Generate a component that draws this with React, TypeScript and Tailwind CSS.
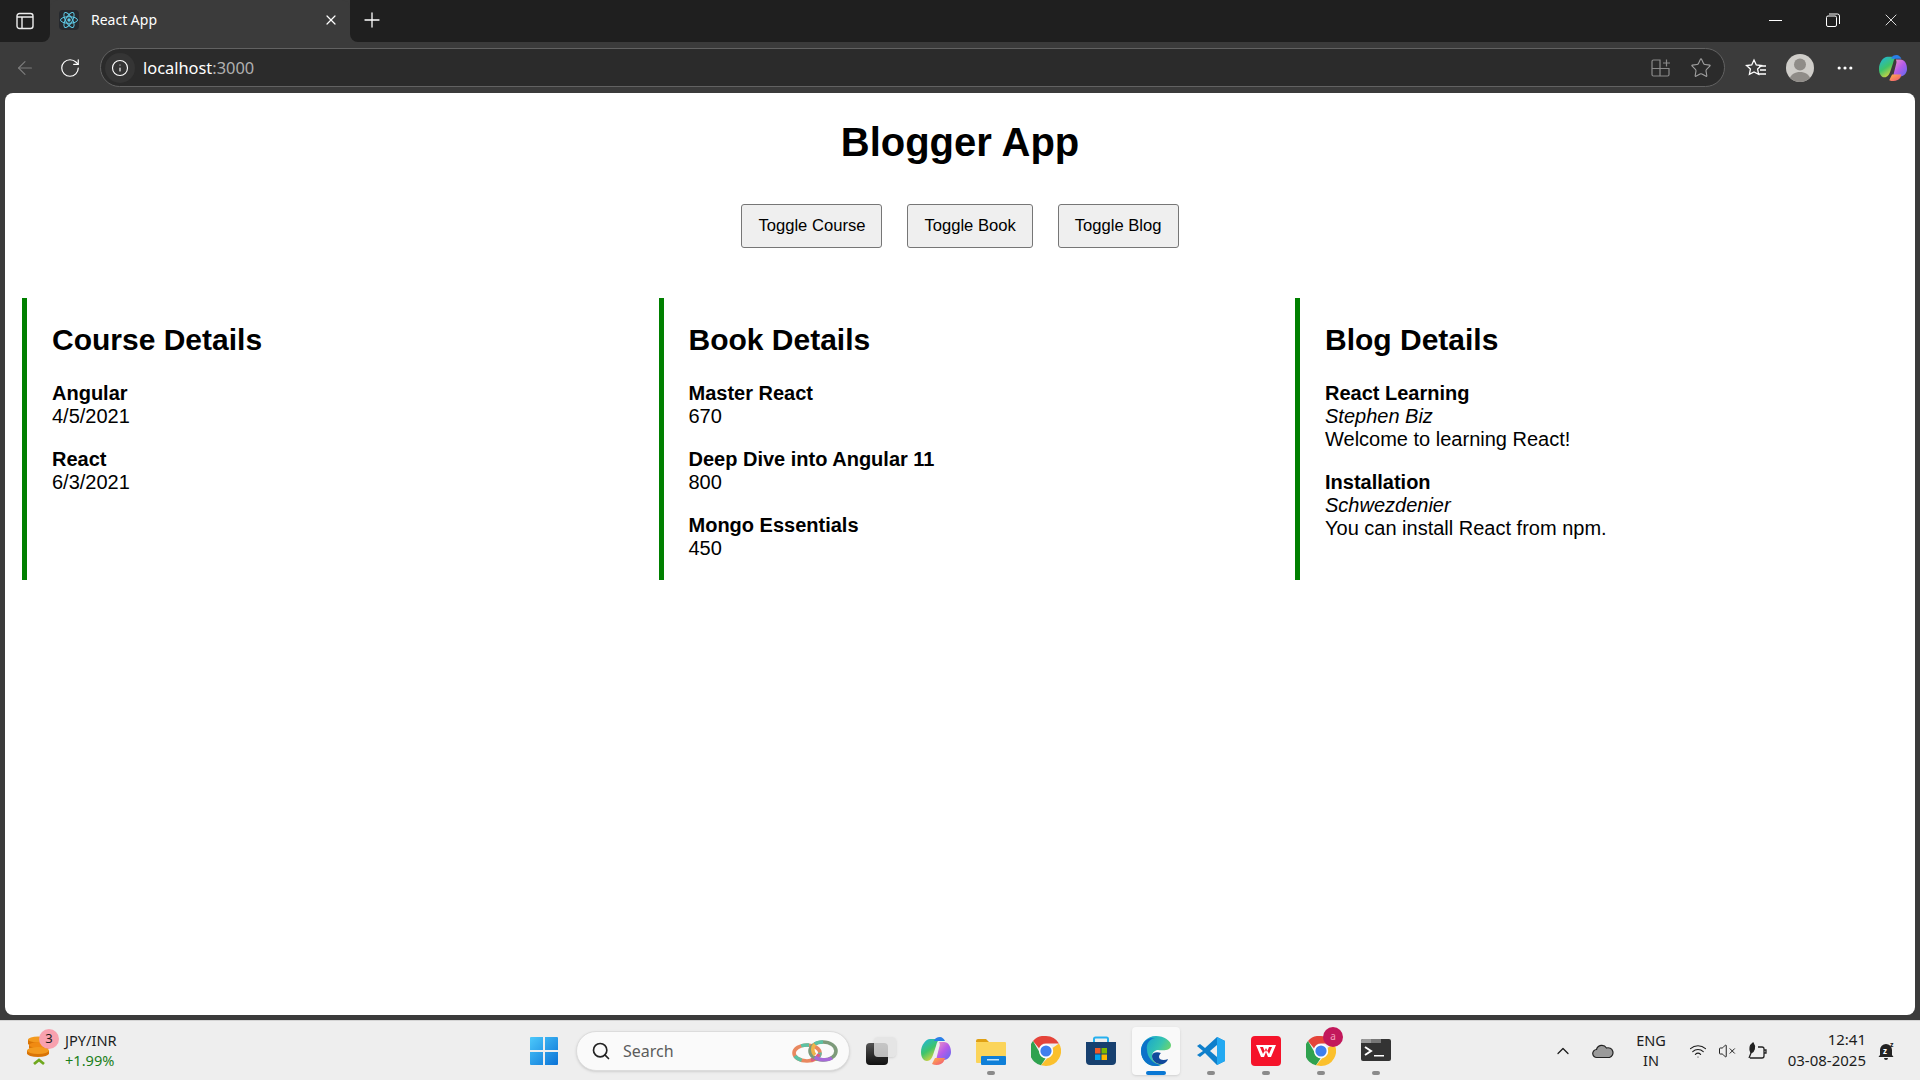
import { useState } from 'react'
import { ArrowLeft, RotateCw, Info, X, Plus, Star, MoreHorizontal, ChevronUp, Search, VolumeX, Wifi } from 'lucide-react'

const courses = [
  { name: 'Angular', date: '4/5/2021' },
  { name: 'React', date: '6/3/2021' },
]
const books = [
  { name: 'Master React', price: 670 },
  { name: 'Deep Dive into Angular 11', price: 800 },
  { name: 'Mongo Essentials', price: 450 },
]
const blogs = [
  { title: 'React Learning', author: 'Stephen Biz', body: 'Welcome to learning React!' },
  { title: 'Installation', author: 'Schwezdenier', body: 'You can install React from npm.' },
]

function ReactLogo() {
  return (
    <svg viewBox="0 0 20 20" className="h-5 w-5 rounded-sm bg-[#26292e]" fill="none" stroke="#5ecbe8" strokeWidth="1">
      <ellipse cx="10" cy="10" rx="8.5" ry="3.3" />
      <ellipse cx="10" cy="10" rx="8.5" ry="3.3" transform="rotate(60 10 10)" />
      <ellipse cx="10" cy="10" rx="8.5" ry="3.3" transform="rotate(120 10 10)" />
      <circle cx="10" cy="10" r="1.7" fill="#5ecbe8" stroke="none" />
    </svg>
  )
}

function Copilot({ size, id }: { size: number; id: string }) {
  return (
    <svg viewBox="0 0 30 30" width={size} height={size}>
      <defs>
        <linearGradient id={id + 'a'} x1="0" y1="0" x2="0.6" y2="1">
          <stop offset="0" stopColor="#1cb4e8" />
          <stop offset="0.55" stopColor="#3fc46a" />
          <stop offset="1" stopColor="#e8d33a" />
        </linearGradient>
        <linearGradient id={id + 'b'} x1="0" y1="0" x2="1" y2="1">
          <stop offset="0" stopColor="#f29ac0" />
          <stop offset="0.5" stopColor="#b65be8" />
          <stop offset="1" stopColor="#5a6cf0" />
        </linearGradient>
        <linearGradient id={id + 'c'} x1="0" y1="0" x2="1" y2="1">
          <stop offset="0" stopColor="#ffb347" />
          <stop offset="1" stopColor="#f0507a" />
        </linearGradient>
      </defs>
      <path d="M9 3h10c-2 1-3 3-4 7l-3 9c-1 3-3 6-6 6-3 0-6-3-6-9C0 9 5 3 9 3z" fill={`url(#${id}a)`} />
      <path d="M19 1c-3 0-5 1-6 4h11c-1-2-3-4-5-4z" fill="#2a7fe8" />
      <path d="M18 6h5c4 0 7 4 7 10 0 4-3 8-7 8h-8l3-12c1-3 1-4 0-6z" fill={`url(#${id}b)`} />
      <path d="M11 28c4 2 10 1 12-3l1-3H14l-2 4z" fill={`url(#${id}c)`} />
    </svg>
  )
}

function WindowsLogo() {
  return (
    <svg viewBox="0 0 30 30" width="30" height="30">
      <defs>
        <linearGradient id="win" x1="0" y1="0" x2="1" y2="1">
          <stop offset="0" stopColor="#4cc9fb" />
          <stop offset="1" stopColor="#0a72d6" />
        </linearGradient>
      </defs>
      <path d="M1 2a1 1 0 0 1 1-1h12v13H1zM16 1h12a1 1 0 0 1 1 1v12H16zM1 16h13v13H2a1 1 0 0 1-1-1zM16 16h13v12a1 1 0 0 1-1 1H16z" fill="url(#win)" />
    </svg>
  )
}

function Rings() {
  return (
    <svg viewBox="0 0 48 26" width="48" height="26" fill="none" strokeWidth="3.6">
      <ellipse cx="16" cy="15" rx="13" ry="8" stroke="#e9885f" />
      <ellipse cx="16" cy="15" rx="13" ry="8" stroke="#5bc2a4" strokeDasharray="8 14" />
      <path d="M20 22c4-1 7-3 8-6" stroke="#e05a83" />
      <ellipse cx="32" cy="13" rx="13" ry="9" stroke="#7d9a7a" />
      <path d="M24 19c3 3 12 4 17 1" stroke="#a66ad8" />
      <path d="M24 6c-3 3-3 8 0 11" stroke="#f0b34a" />
      <path d="M24 6c2-2 5-2 8-2" stroke="#5bc2a4" />
    </svg>
  )
}

function Chrome({ size = 30 }: { size?: number }) {
  return (
    <svg viewBox="0 0 30 30" width={size} height={size}>
      <path d="M15 0a15 15 0 0 1 13 7.5H15a7.5 7.5 0 0 0-7 4.7L2 4.9A15 15 0 0 1 15 0z" fill="#e5443a" />
      <path d="M2 4.9l6.5 11.3a7.5 7.5 0 0 0 6 6.3L10 29.2A15 15 0 0 1 2 4.9z" fill="#2fa24f" />
      <path d="M28 7.5A15 15 0 0 1 15 30l-5-.8 6-6.8a7.5 7.5 0 0 0 5.500-10.400L28 7.500z" fill="#fbc02d" />
      <circle cx="15" cy="15" r="7" fill="#fff" />
      <circle cx="15" cy="15" r="5.600" fill="#3f7fee" />
    </svg>
  )
}

function Folder() {
  return (
    <svg viewBox="0 0 30 30" width="30" height="30">
      <path d="M0 5a2 2 0 0 1 2-2h8l3 3h-13z" fill="#e0a013" />
      <rect x="0" y="6" width="30" height="21" rx="1" fill="#fbd45a" />
      <rect x="5" y="20" width="25" height="9" rx="1" fill="#0f7fd8" />
      <rect x="11" y="23" width="12" height="1.500" fill="#bfe3fb" />
    </svg>
  )
}

function Store() {
  return (
    <svg viewBox="0 0 30 30" width="30" height="30">
      <path d="M8 6V3a1.500 1.500 0 0 1 1.500-1.500h11A1.500 1.500 0 0 1 22 3v3" fill="none" stroke="#27b0ee" strokeWidth="2" />
      <path d="M0 6h30v19a4 4 0 0 1-4 4H4a4 4 0 0 1-4-4z" fill="#17406f" />
      <rect x="9" y="12" width="5.500" height="5.500" fill="#f05a28" />
      <rect x="15.500" y="12" width="5.500" height="5.500" fill="#7fba00" />
      <rect x="9" y="18.500" width="5.500" height="5.500" fill="#00a4ef" />
      <rect x="15.500" y="18.500" width="5.500" height="5.500" fill="#ffb900" />
    </svg>
  )
}

function Edge() {
  return (
    <svg viewBox="0 0 30 30" width="30" height="30">
      <defs>
        <linearGradient id="edg" x1="0" y1="0" x2="1" y2="0.6">
          <stop offset="0" stopColor="#0f9bd8" />
          <stop offset="0.6" stopColor="#35c4b0" />
          <stop offset="1" stopColor="#7ed957" />
        </linearGradient>
      </defs>
      <path d="M15 0C6 0 0 7 0 15c0 9 7 15 14 15 3 0 6-1 8-2-6 1-11-3-11-8 0-3 2-5 5-6 4 0 14 2 14-5C30 5 23 0 15 0z" fill="url(#edg)" />
      <path d="M0 15C0 7 6 1 14 2 8 3 5 8 6 14c0 7 6 14 14 15-2 1-4 1-6 1C7 30 0 24 0 15z" fill="#0c72c9" />
      <path d="M11 20c0 5 5 9 11 8 2-1 4-2 5-5-4 2-9 1-9-2 0-2 1-3 2-4-5-2-9 0-9 3z" fill="#114a9c" />
    </svg>
  )
}

function VSCode() {
  return (
    <svg viewBox="0 0 30 30" width="30" height="30">
      <path d="M21 1l8 4v20l-8 4-12-12-5 4-3-2 6-4-6-5 3-2 5 4z" fill="#0e7fcb" />
      <path d="M21 1l8 4v20l-8 4z" fill="#23a9f2" />
      <path d="M21 9l-7 6 7 6z" fill="#eeeeee" />
    </svg>
  )
}

function Wps() {
  return (
    <svg viewBox="0 0 30 30" width="30" height="30">
      <rect width="30" height="30" rx="4" fill="#f5132a" />
      <path d="M5 9h20l-5 12h-3l-2-5-2 5h-3z" fill="#fff" />
      <path d="M9 11h3l2 5 1-2 1 2 2-5h3l-3 7-3-6-3 6z" fill="#f5132a" />
    </svg>
  )
}

function Terminal() {
  return (
    <svg viewBox="0 0 30 24" width="30" height="24">
      <rect width="30" height="22" rx="2" fill="#333" />
      <path d="M0 2a2 2 0 0 1 2-2h8v4H0z" fill="#999" />
      <rect x="10" width="10" height="4" fill="#777" />
      <path d="M4 8l6 4-6 4" fill="none" stroke="#fff" strokeWidth="2" />
      <rect x="13" y="16" width="10" height="1.500" fill="#fff" />
    </svg>
  )
}

function Coins() {
  return (
    <svg viewBox="0 0 26 30" width="26" height="30">
      <path d="M2 3.500h20v4a10 3 0 0 1-20 0z" fill="#d97406" />
      <ellipse cx="12" cy="3.500" rx="10" ry="3" fill="#f39a1e" />
      <path d="M3 9h20v3a10 3 0 0 1-20 0z" fill="#d97406" />
      <ellipse cx="13" cy="9" rx="10" ry="3" fill="#f08a12" />
      <path d="M1 14.500h22v3a11 3.500 0 0 1-22 0z" fill="#d97406" />
      <ellipse cx="12" cy="14.500" rx="11" ry="3.500" fill="#f39a1e" />
      <path d="M8 28l5-4 5 4" fill="none" stroke="#6fa81e" strokeWidth="2.800" />
    </svg>
  )
}

function TaskItem({ children, dot, active }: { children: React.ReactNode; dot?: boolean; active?: boolean }) {
  return (
    <div className={active ? 'relative flex h-12 w-12 mx-[3.5px] items-center justify-center rounded bg-[#f9f9f9] shadow-sm' : 'relative flex h-12 w-[55px] items-center justify-center'}>
      {children}
      {dot && <span className="absolute bottom-0 left-1/2 h-1 w-2 -translate-x-1/2 rounded-full bg-[#8a8a8a]" />}
      {active && <span className="absolute bottom-0 left-1/2 h-1 w-5 -translate-x-1/2 rounded-full bg-[#0a78d4]" />}
    </div>
  )
}

export default function App() {
  const [showCourse, setShowCourse] = useState(true)
  const [showBook, setShowBook] = useState(true)
  const [showBlog, setShowBlog] = useState(true)

  return (
    <div className="flex h-screen w-full flex-col overflow-hidden bg-[#3b3b3b] font-['Noto_Sans',sans-serif]">
      {/* tab strip */}
      <div className="flex h-[42px] shrink-0 text-white">
        <div className="flex w-[50px] items-center justify-center rounded-br-lg bg-[#1f1f1f]">
          <svg viewBox="0 0 18 18" className="h-[18px] w-[18px]" fill="none" stroke="#eee" strokeWidth="1.400">
            <rect x="1" y="1.500" width="16" height="15" rx="2.500" />
            <path d="M1 5h16M6 5v11" />
          </svg>
        </div>
        <div className="flex w-[300px] items-center rounded-t-lg bg-[#3b3b3b] pb-[2px] pl-[9px] pr-[11px]">
          <ReactLogo />
          <span className="ml-3 flex-1 text-sm">React App</span>
          <X className="h-4 w-4" strokeWidth={1.800} />
        </div>
        <div className="flex flex-1 items-center justify-between rounded-bl-lg bg-[#1f1f1f] pb-[2px] pl-[10px]">
          <Plus className="h-6 w-6" strokeWidth={1.300} />
          <div className="flex items-center">
            <span className="mr-[22px] h-px w-[13px] bg-white" />
            <span className="flex w-[58px] justify-center">
              <svg viewBox="0 0 14 14" className="h-[14px] w-[14px]" fill="none" stroke="#fff" strokeWidth="1">
                <rect x="0.500" y="3" width="10" height="10.500" rx="1.500" />
                <path d="M3 1h8.500a2 2 0 0 1 2 2v8" />
              </svg>
            </span>
            <span className="flex w-[58px] justify-center"><X className="h-5 w-5" strokeWidth={1} /></span>
          </div>
        </div>
      </div>

      {/* toolbar */}
      <div className="flex h-[51px] shrink-0 items-center pl-[14px] pr-[13px] text-white">
        <ArrowLeft className="h-[22px] w-[22px] text-[#7d7d7d]" strokeWidth={1.200} />
        <RotateCw className="ml-[23px] h-[22px] w-[22px]" strokeWidth={1.300} />
        <div className="ml-[19px] flex h-[39px] flex-1 items-center rounded-full border border-[#626262] bg-[#2b2b2b] pl-[4px] pr-[12px]">
          <span className="flex h-[30px] w-[30px] items-center justify-center rounded-full bg-[#353535]">
            <Info className="h-[18px] w-[18px]" strokeWidth={1.500} />
          </span>
          <span className="ml-[8px] flex-1 pt-[2px] text-[16.4px]">
            localhost<span className="text-[#b0b0b0]">:3000</span>
          </span>
          <svg viewBox="0 0 20 20" className="mr-[19px] h-5 w-5" fill="none" stroke="#8a8a8a" strokeWidth="1.200">
            <path d="M1 3.500a1.500 1.500 0 0 1 1.500-1.500H9v16H2.500A1.500 1.500 0 0 1 1 16.500zM1 10.500h17v6a1.500 1.500 0 0 1-1.500 1.500H9M12 5h7M15.500 1.500v7" />
          </svg>
          <Star className="h-[22px] w-[22px] text-[#a0a0a0]" strokeWidth={1.200} />
        </div>
        <svg viewBox="0 0 22 20" className="ml-[20px] h-5 w-[22px]" fill="none" stroke="#fff" strokeWidth="1.300">
          <path d="M9 2l2.300 5 5.200.5-3.900 3.500 1 5.300L9 14l-4.600 2.300 1-5.300L1.500 7.500 6.700 7z" />
          <path d="M14 8h7M15 12h6M14 16h7" />
        </svg>
        <span className="ml-[19px] flex h-7 w-7 items-end justify-center overflow-hidden rounded-full bg-[#cfcdc9]">
          <svg viewBox="0 0 28 28" className="h-7 w-7" fill="#8f8c88">
            <circle cx="14" cy="10.500" r="6" />
            <path d="M3 26c2-6 6-8 11-8s9 2 11 8l-11 3z" />
          </svg>
        </span>
        <MoreHorizontal className="ml-[21px] h-5 w-5" strokeWidth={1.800} />
        <span className="ml-[24px]"><Copilot size={28} id="cpt" /></span>
      </div>

      {/* page */}
      <div className="mx-[5px] min-h-0 flex-1 rounded-lg bg-white font-['Liberation_Sans',sans-serif] text-black">
        <h1 className="mt-[26px] text-center text-[40px] font-bold leading-[46px]">Blogger App</h1>
        <div className="mt-[39px] flex justify-center gap-[25px]">
          <button onClick={() => setShowCourse(!showCourse)} className="h-[44px] rounded-[3px] border border-[#767676] bg-[#efefef] px-4 text-[16.6px]">Toggle Course</button>
          <button onClick={() => setShowBook(!showBook)} className="h-[44px] rounded-[3px] border border-[#767676] bg-[#efefef] px-4 text-[16.6px]">Toggle Book</button>
          <button onClick={() => setShowBlog(!showBlog)} className="h-[44px] rounded-[3px] border border-[#767676] bg-[#efefef] px-4 text-[16.6px]">Toggle Blog</button>
        </div>
        <div className="mt-[50px] flex gap-[6.5px] pl-[17px] text-[20px] leading-[23px]">
          <section className="w-[630px] shrink-0 border-l-[5px] border-[#008000] pl-[25px] pt-[23px]">
            <h2 className="mb-[24px] text-[30px] font-bold leading-[37px]">Course Details</h2>
            {showCourse && courses.map(c => (
              <div key={c.name} className="mb-[20px]">
                <div className="font-bold">{c.name}</div>
                <div>{c.date}</div>
              </div>
            ))}
          </section>
          <section className="w-[630px] shrink-0 border-l-[5px] border-[#008000] pl-[25px] pt-[23px]">
            <h2 className="mb-[24px] text-[30px] font-bold leading-[37px]">Book Details</h2>
            {showBook && books.map(b => (
              <div key={b.name} className="mb-[20px]">
                <div className="font-bold">{b.name}</div>
                <div>{b.price}</div>
              </div>
            ))}
          </section>
          <section className="w-[630px] shrink-0 border-l-[5px] border-[#008000] pl-[25px] pt-[23px]">
            <h2 className="mb-[24px] text-[30px] font-bold leading-[37px]">Blog Details</h2>
            {showBlog && blogs.map(b => (
              <div key={b.title} className="mb-[20px]">
                <div className="font-bold">{b.title}</div>
                <div className="italic">{b.author}</div>
                <div>{b.body}</div>
              </div>
            ))}
          </section>
        </div>
      </div>

      {/* taskbar */}
      <div className="mt-[5px] flex h-[60px] shrink-0 items-center border-t border-[#d4d4d4] bg-[#eeeeee] text-[#1c1c1c]">
        <div className="relative flex w-[516px] items-center pl-[26px]">
          <Coins />
          <span className="absolute left-[39px] top-[-3px] flex h-5 w-5 items-center justify-center rounded-full bg-[#f8a1ae] text-[13px]">3</span>
          <div className="ml-[13px] mt-[-2px] whitespace-nowrap text-[14.6px] leading-[20px]">
            <div>JPY/INR</div>
            <div className="text-[#1b7f1b]">+1.99%</div>
          </div>
        </div>
        <TaskItem><WindowsLogo /></TaskItem>
        <div className="ml-[5px] flex h-[40px] w-[274px] items-center rounded-full border border-[#dcdcdc] bg-[#fafafa] pl-[14px] pr-[10px] shadow-sm">
          <Search className="h-5 w-5 text-[#222]" strokeWidth={2} />
          <span className="ml-[12px] flex-1 text-base text-[#5c5c5c]">Search</span>
          <Rings />
        </div>
        <div className="ml-[3px] flex items-center">
          <TaskItem>
            <div className="relative h-7 w-[30px]">
              <span className="absolute bottom-0 left-0 h-[22px] w-[22px] rounded-sm bg-gradient-to-b from-[#555] to-[#111]" />
              <span className="absolute right-0 top-0 h-[20px] w-[22px] rounded-sm bg-[#e2e2e2]/80 shadow-sm" />
            </div>
          </TaskItem>
          <TaskItem><Copilot size={30} id="cpb" /></TaskItem>
          <TaskItem dot><Folder /></TaskItem>
          <TaskItem><Chrome /></TaskItem>
          <TaskItem><Store /></TaskItem>
          <TaskItem active><Edge /></TaskItem>
          <TaskItem dot><VSCode /></TaskItem>
          <TaskItem dot><Wps /></TaskItem>
          <TaskItem dot>
            <Chrome />
            <span className="absolute right-[5px] top-0 flex h-5 w-5 items-center justify-center rounded-full bg-[#c2185b] text-[10px] text-[#f2a0bb]">a</span>
          </TaskItem>
          <TaskItem dot><Terminal /></TaskItem>
        </div>
        <div className="ml-auto flex items-center pr-[24px]">
          <ChevronUp className="h-5 w-5" strokeWidth={1.500} />
          <svg viewBox="0 0 22 16" className="ml-[19px] h-4 w-[22px]" fill="#9a9a9a" stroke="#222" strokeWidth="1.200">
            <path d="M5 14.500a4 4 0 0 1-.5-8 5.500 5.500 0 0 1 10-1.500 4.500 4.500 0 0 1 3 9.500z" />
          </svg>
          <div className="-mt-[2px] ml-[21px] w-[32px] whitespace-nowrap text-center text-[14.5px] leading-[20px]">
            <div>ENG</div>
            <div>IN</div>
          </div>
          <Wifi className="ml-[22px] h-[18px] w-[18px]" strokeWidth={1.500} />
          <VolumeX className="ml-[11px] h-[18px] w-[18px]" strokeWidth={1.300} />
          <svg viewBox="0 0 22 18" className="ml-[10px] h-[18px] w-[22px]" fill="none" stroke="#222" strokeWidth="1.300">
            <path d="M4 16h12a2 2 0 0 0 2-2V7a2 2 0 0 0-2-2h-4M18 8h2v3h-2" />
            <path d="M7 1c-3 2-4 6-2 10 3-1 5-6 2-10zM5 11l-2 5" fill="#222" />
          </svg>
          <div className="-mt-[2px] ml-[12px] w-[86px] whitespace-nowrap text-right text-[15px] leading-[21px]">
            <div>12:41</div>
            <div>03-08-2025</div>
          </div>
          <svg viewBox="0 0 18 20" className="ml-[12px] h-5 w-[18px]" fill="#222">
            <path d="M8 3a6 6 0 0 0-6 6v5l-1.500 2h15L14 14V9a6 6 0 0 0-6-6zM6 17a2 2 0 0 0 4 0z" />
            <text x="5" y="13" fontSize="8" fill="#fff" fontWeight="700">z</text>
            <text x="12" y="6" fontSize="7" fill="#222" fontWeight="700">z</text>
          </svg>
        </div>
      </div>
    </div>
  )
}
